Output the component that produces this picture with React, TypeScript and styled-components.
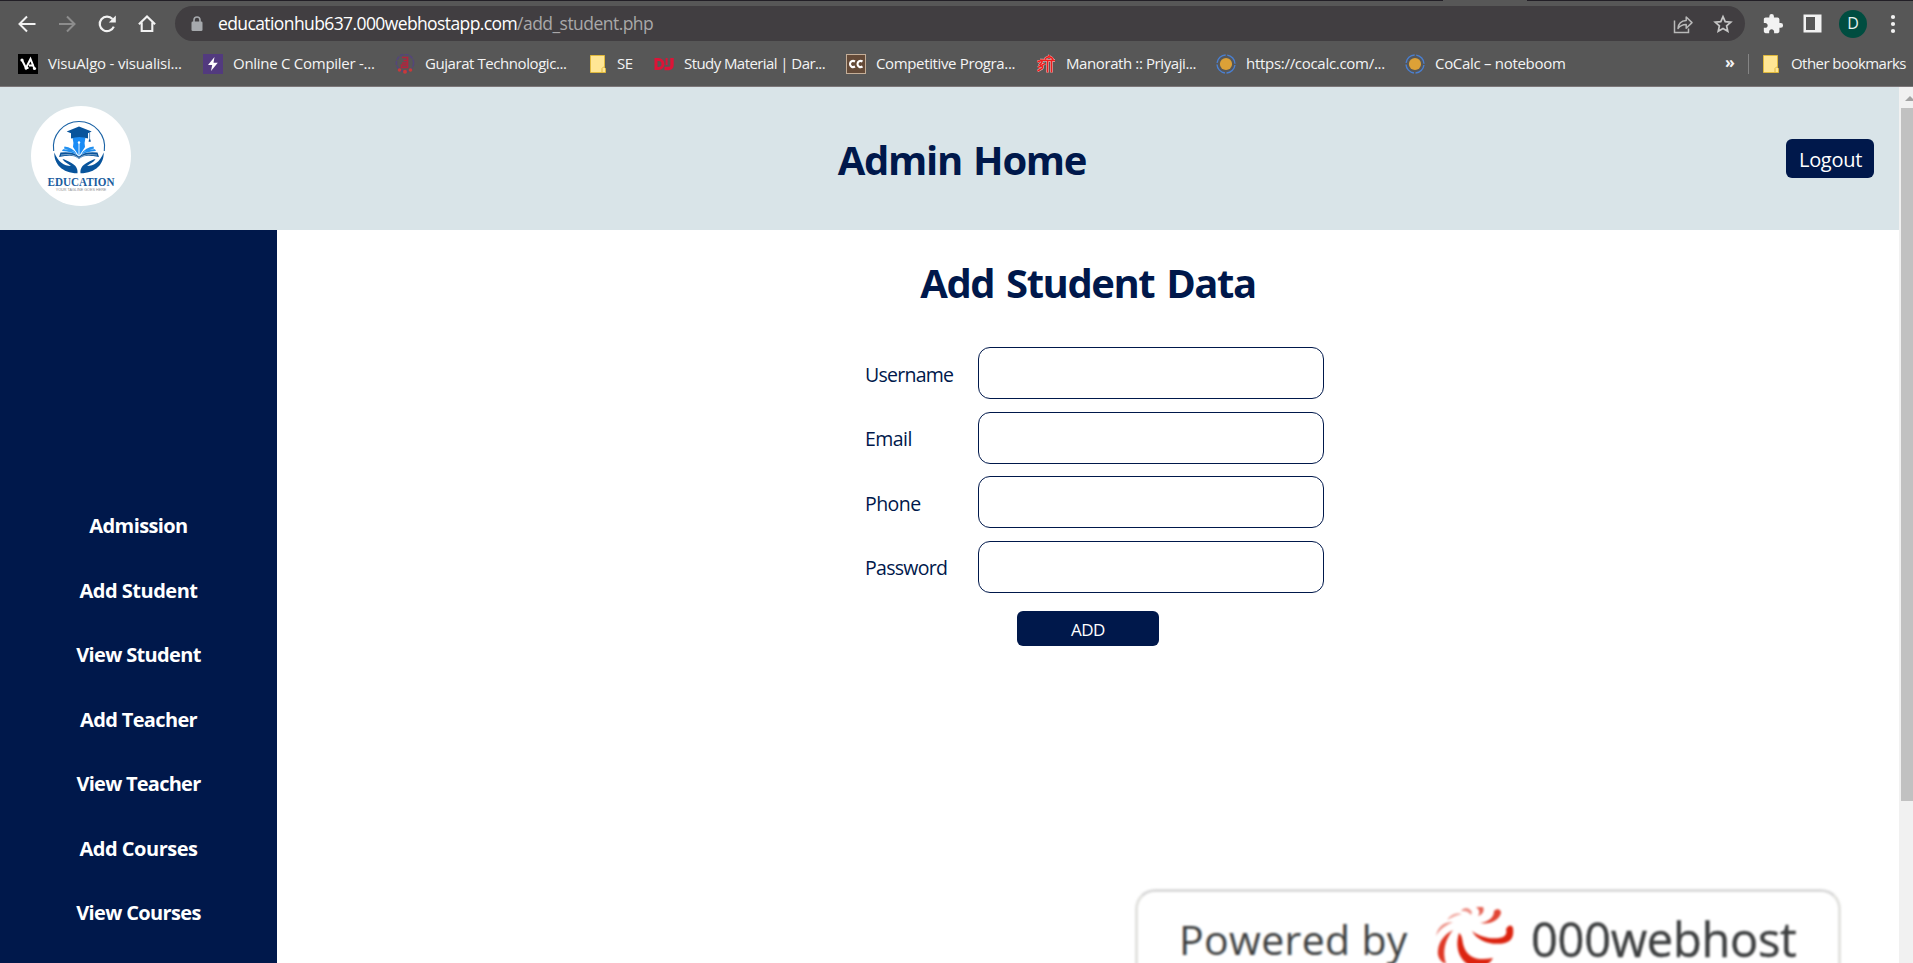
import React from 'react';
import styled, { createGlobalStyle } from 'styled-components';

const NAVY = '#00184b';

const Global = createGlobalStyle`
  *, *::before, *::after { box-sizing: border-box; }
  html, body { margin: 0; padding: 0; overflow: hidden; background: #fff; }
  body { font-family: "Open Sans", "Noto Sans", sans-serif; }
  svg { display: block; flex: none; }
`;

const Window = styled.div`
  width: 1913px;
  height: 963px;
  display: flex;
  flex-direction: column;
  overflow: hidden;
`;

/* ---------- browser chrome ---------- */

const Chrome = styled.div`
  height: 87px;
  flex: none;
  display: flex;
  flex-direction: column;
  background: #575757;
  border-bottom: 1px solid #7c7779;
  color: #f4f4f4;
`;

const TabEdge = styled.div`
  height: 1px;
  display: flex;
  justify-content: flex-end;
  padding-right: 386px;
  background: #221f26;
`;

const ActiveTab = styled.div`
  width: 84px;
  background: #575757;
`;

const Toolbar = styled.div`
  height: 45px;
  display: flex;
  align-items: center;
  padding-left: 17px;
`;

const NavButtons = styled.div`
  width: 158px;
  flex: none;
  display: flex;
  gap: 20px;
`;

const AddressBar = styled.div`
  width: 1570px;
  flex: none;
  height: 35px;
  display: flex;
  align-items: center;
  padding: 0 12px 0 16px;
  border-radius: 18px;
  background: #413e41;
`;

const Url = styled.div`
  flex: 1;
  padding: 0 0 1px 15px;
  font-size: 17.5px;
  line-height: 24px;
  letter-spacing: -0.6px;
  color: #fff;
`;

const UrlPath = styled.span`
  color: #a9a8a9;
  letter-spacing: -0.54px;
`;

const AddressActions = styled.div`
  display: flex;
  gap: 20px;
`;

const ToolbarActions = styled.div`
  display: flex;
  flex: 1;
  align-items: center;
  padding-left: 17px;
`;

const Avatar = styled.div`
  width: 28px;
  height: 28px;
  margin: 0 14px 0 17px;
  padding-bottom: 1px;
  border-radius: 50%;
  background: #004d40;
  display: grid;
  place-items: center;
  font-size: 16px;
  line-height: 20px;
  color: #e6f2ef;
`;

const Bookmarks = styled.div`
  height: 36px;
  display: flex;
  align-items: center;
  padding-left: 18px;
`;

const Bookmark = styled.div<{ $width?: number; $gap?: number; $track?: number }>`
  width: ${p => (p.$width ? `${p.$width}px` : 'auto')};
  flex: none;
  display: flex;
  align-items: center;
  gap: ${p => p.$gap ?? 10}px;
  font-size: 15px;
  line-height: 20px;
  letter-spacing: ${p => p.$track ?? -0.4}px;
  white-space: nowrap;

  span { padding-bottom: 2px; }
`;

const Overflow = styled.div`
  margin-left: auto;
  width: 23px;
  font-size: 16px;
  font-weight: 700;
  line-height: 18px;
  padding-bottom: 5px;
`;

const Divider = styled.div`
  width: 1px;
  height: 20px;
  margin-right: 14px;
  background: #858585;
`;

const OtherBookmarks = styled.div`
  width: 150px;
  display: flex;
  align-items: center;
  gap: 12px;
  font-size: 15px;
  line-height: 20px;
  letter-spacing: -0.55px;
  white-space: nowrap;

  span { padding-bottom: 2px; }
`;

/* ---------- page ---------- */

const Viewport = styled.div`
  flex: 1;
  display: flex;
  min-height: 0;
`;

const Page = styled.div`
  width: 1899px;
  display: flex;
  flex-direction: column;
  position: relative;
  overflow: hidden;
`;

const Scrollbar = styled.div`
  width: 14px;
  display: flex;
  flex-direction: column;
  background: #f1f1f1;
  padding-left: 2px;
`;

const ScrollUp = styled.div`
  height: 21px;
  padding: 9px 0 0 4px;
  overflow: hidden;
`;

const Thumb = styled.div`
  height: 693px;
  background: #c1c1c1;
`;

const Header = styled.header`
  height: 143px;
  flex: none;
  display: flex;
  justify-content: space-between;
  padding: 19px 25px 0 31px;
  background: #d9e4e8;
`;

const PageTitle = styled.h1`
  margin: 0;
  padding: 27px 0 0 7px;
  font-size: 40px;
  line-height: 54px;
  font-weight: 700;
  letter-spacing: -1.3px;
  word-spacing: 2px;
  color: ${NAVY};
`;

const Logout = styled.button`
  width: 88px;
  height: 39px;
  margin: 33px 0 0;
  border: 0;
  border-radius: 6px;
  background: ${NAVY};
  color: #fff;
  font: 400 20px/38px "Open Sans", sans-serif;
  letter-spacing: -0.3px;
  padding: 2px 0 0 1px;
`;

const Body = styled.div`
  flex: 1;
  display: flex;
  min-height: 0;
`;

const Sidebar = styled.nav`
  width: 277px;
  display: flex;
  flex-direction: column;
  align-items: center;
  padding-top: 264px;
  background: ${NAVY};
`;

const NavLink = styled.a<{ $track: number }>`
  height: 64.5px;
  flex: none;
  font-size: 20px;
  line-height: 64.5px;
  font-weight: 700;
  letter-spacing: ${p => p.$track}px;
  color: #fff;
`;

const Main = styled.main`
  flex: 1;
  display: flex;
  flex-direction: column;
  align-items: center;
  padding-top: 26px;
`;

const FormTitle = styled.h2`
  margin: 0;
  font-size: 40px;
  line-height: 54px;
  font-weight: 700;
  letter-spacing: -1.45px;
  word-spacing: 3px;
  color: ${NAVY};
`;

const Form = styled.form`
  width: 459px;
  margin: 37px 0 0 13px;
  display: flex;
  flex-direction: column;
  gap: 12.6px;
`;

const Field = styled.label<{ $track: number }>`
  display: flex;
  align-items: center;
  justify-content: space-between;
  font-size: 19.5px;
  letter-spacing: ${p => p.$track}px;
  color: ${NAVY};

  span { padding-top: 2.4px; }
`;

const Input = styled.input`
  width: 346px;
  height: 52px;
  border: 1px solid ${NAVY};
  border-radius: 12px;
  background: #fff;
  outline: none;
`;

const Submit = styled.button`
  width: 142px;
  height: 35px;
  margin: 6px 0 0 152px;
  border: 0;
  border-radius: 6px;
  background: ${NAVY};
  color: #fff;
  font: 400 17px/34px "Open Sans", sans-serif;
  letter-spacing: -0.5px;
  padding: 2px 0 0;
`;

const HostBadge = styled.div`
  position: absolute;
  left: 1135px;
  top: 802px;
  width: 706px;
  height: 120px;
  display: flex;
  align-items: flex-start;
  padding-left: 41px;
  border: 3px solid #e2e2df;
  border-top-color: #dadada;
  border-radius: 20px;
  background: #fff;
  color: #3d3f40;
  filter: blur(0.9px);
  white-space: nowrap;
`;

const PoweredBy = styled.span`
  width: 256px;
  padding-top: 19px;
  font-size: 41px;
  line-height: 56px;
  letter-spacing: 0.35px;
`;

const HostName = styled.span`
  padding: 15px 0 0 16px;
  font-size: 47px;
  line-height: 64px;
  letter-spacing: -0.3px;
  -webkit-text-stroke: 0.4px #3d3f40;
`;

/* ---------- drawings ---------- */

const BackIcon = () => (
  <svg width="20" height="20" viewBox="0 0 20 20" fill="none" stroke="#f2f2f2" strokeWidth="2">
    <path d="M18.5 10H3M10 2.5 2.5 10l7.5 7.5" />
  </svg>
);

const ForwardIcon = () => (
  <svg width="20" height="20" viewBox="0 0 20 20" fill="none" stroke="#8d8d8d" strokeWidth="2">
    <path d="M2 10h15.500M10 2.500 17.500 10 10 17.500" />
  </svg>
);

const ReloadIcon = () => (
  <svg width="20" height="20" viewBox="0 0 20 20">
    <path d="M16.800 12.600A7.300 7.300 0 1 1 15.500 5" fill="none" stroke="#f2f2f2" strokeWidth="2.200" />
    <path d="M18.800 1.500v7h-7z" fill="#f2f2f2" />
  </svg>
);

const HomeIcon = () => (
  <svg width="20" height="20" viewBox="0 0 20 20" fill="none" stroke="#f2f2f2" strokeWidth="2.100">
    <path d="M1.900 10.200 10 2.500l8.100 7.700M4.700 8.500v8.500h10.600V8.500" />
  </svg>
);

const LockIcon = () => (
  <svg width="12" height="16" viewBox="0 0 12 16">
    <rect x="0.500" y="5.500" width="11" height="9.500" rx="1.300" fill="#a6a9ad" />
    <path d="M3 6V4a3 3 0 0 1 6 0v2" fill="none" stroke="#a6a9ad" strokeWidth="1.600" />
  </svg>
);

const ShareIcon = () => (
  <svg width="20" height="20" viewBox="0 0 20 20" fill="none" stroke="#b9b9b9" strokeWidth="1.500">
    <path d="M1.500 6.500v12H15.500v-4" />
    <path d="M5 14.500c.4-5 3.200-7.600 8.200-7.900V3l5.800 5.600-5.800 5.600v-3.600C9.600 10.700 7 11.800 5 14.500z" strokeLinejoin="round" />
  </svg>
);

const StarIcon = () => (
  <svg width="20" height="20" viewBox="0 0 20 20" fill="none" stroke="#c6c6c6" strokeWidth="1.700">
    <path d="M10 2.600l2.200 5.100 5.600.5-4.200 3.700 1.200 5.400L10 14.500l-4.800 2.800 1.200-5.400L2.200 8.200l5.600-.5z" />
  </svg>
);

const ExtensionButton = styled.div`
  margin-right: 19px;
`;

const PuzzleIcon = () => (
  <svg width="22" height="22" viewBox="0 0 24 24" fill="#f2f2f2">
    <path d="M20.500 11H19V7c0-1.100-.9-2-2-2h-4V3.500a2.500 2.500 0 0 0-5 0V5H4c-1.100 0-2 .9-2 2v3.800h1.500c1.500 0 2.700 1.200 2.700 2.700S5 16.200 3.500 16.200H2V20c0 1.100.9 2 2 2h3.800v-1.500c0-1.500 1.200-2.700 2.700-2.700s2.700 1.200 2.700 2.700V22H17c1.100 0 2-.9 2-2v-4h1.500a2.500 2.500 0 0 0 0-5z" />
  </svg>
);

const SidePanelIcon = () => (
  <svg width="19" height="19" viewBox="0 0 19 19">
    <rect x="0.500" y="0.500" width="18" height="18" fill="#f2f2f2" />
    <rect x="3" y="3" width="9" height="13" fill="#575757" />
  </svg>
);

const DotsIcon = () => (
  <svg width="24" height="20" viewBox="0 0 24 20" fill="#f2f2f2">
    <circle cx="12" cy="3" r="2.100" />
    <circle cx="12" cy="10" r="2.100" />
    <circle cx="12" cy="17" r="2.100" />
  </svg>
);

const FolderIcon = () => (
  <svg width="16" height="18" viewBox="0 0 16 18">
    <path d="M.5.500h14v12l1 1v4H.500z" fill="#ffe694" stroke="#e0b93c" />
    <path d="M12 17.500v-4l1.500-1.500h1" fill="none" stroke="#e0b93c" />
  </svg>
);

const VisuAlgoIcon = () => (
  <svg width="20" height="20" viewBox="0 0 20 20">
    <rect width="20" height="20" />
    <path d="M4 6 8 14l4.500-9 4 10M8 14h2.500M11 11.500h5" fill="none" stroke="#fff" strokeWidth="2" />
    <circle cx="4" cy="6" r="1.600" fill="#fff" />
    <circle cx="8" cy="14" r="1.500" fill="#fff" />
    <circle cx="16.500" cy="14.500" r="1.600" fill="#fff" />
  </svg>
);

const BoltIcon = () => (
  <svg width="20" height="20" viewBox="0 0 20 20">
    <rect width="20" height="20" fill="#523a7e" />
    <path d="M11.500 3 5 11h4.200L8 17l6.800-8.300h-4.300z" fill="#fff" />
  </svg>
);

const GtuIcon = () => (
  <svg width="20" height="20" viewBox="0 0 20 20">
    <circle cx="10" cy="9" r="8.600" fill="none" stroke="#54467a" strokeWidth="1.600" strokeDasharray="4 1" />
    <path d="M7 3.500h5.500v10H6.500V11h6M8.500 6.500h4M7 9h5.500" fill="none" stroke="#b3243d" strokeWidth="1.700" />
    <g fill="#c73a3a">
      <circle cx="4.500" cy="16" r="1.800" />
      <circle cx="10" cy="17.800" r="2" />
      <circle cx="15.500" cy="16" r="1.800" />
    </g>
  </svg>
);

const DjIcon = () => (
  <svg width="20" height="20" viewBox="0 0 20 20" fill="none" stroke="#dc1437">
    <path d="M2 5.500h2.500a4 4 0 0 1 0 9H2z" strokeWidth="3" />
    <path d="M18 4v7.500a3 3 0 0 1-3 3h-4.500" strokeWidth="3.400" />
    <path d="M12.600 4v7" strokeWidth="2" />
  </svg>
);

const CcIcon = () => (
  <svg width="20" height="20" viewBox="0 0 20 20">
    <rect x="0.500" y="0.500" width="19" height="19" fill="#644a38" stroke="#c4ae98" />
    <path d="M9 7.500C6.500 6 4 7.500 4 10s2.500 4 5 2.500M16.500 7.500C14 6 11.500 7.500 11.500 10s2.500 4 5 2.500" fill="none" stroke="#fff" strokeWidth="2.100" />
  </svg>
);

const SHRI = 'M1.500 8c3-2 6-1 4 1s-3 1 0 3-1 3-4 5M2 13.500l7-4M4 6 19 6.500M11.500 7v11.500M15.500 7v11.500M9 5c2-3 7-3 8 1M12.500 3l1-2';

const ShriIcon = () => (
  <svg width="20" height="20" viewBox="0 0 20 20" fill="none">
    <path d={SHRI} stroke="#f3dcdc" strokeWidth="2.400" />
    <path d={SHRI} stroke="#ee1c1c" strokeWidth="1.600" />
  </svg>
);

const CoCalcIcon = () => (
  <svg width="20" height="20" viewBox="0 0 20 20">
    <circle cx="10" cy="10" r="9" fill="none" stroke="#4a7fd0" strokeWidth="1.400" strokeDasharray="12.500 1.640" strokeDashoffset="-1" />
    <circle cx="10" cy="10" r="6.100" fill="#dca137" />
  </svg>
);

const EducationLogo = () => (
  <svg width="100" height="100" viewBox="0 0 100 100">
    <circle cx="50" cy="50" r="50" fill="#fff" />
    <path d="M22.700 45A25.600 25.600 0 1 1 73.300 45" fill="none" stroke="#1a62a5" strokeWidth="1.100" />
    <path d="M41.500 31.500Q48 29.500 54.500 31.500 53 37 54 41L48 50 42 41Q43 37 41.500 31.500z" fill="#1a8cf5" />
    <path d="M48 36v14" stroke="#fff" strokeWidth="0.900" />
    <circle cx="48" cy="36.500" r="1.200" fill="#fff" />
    <path d="M35.700 25.600 48 20.500l12.700 5.100-3.700 1.600v5.300q-9-3.200-17 0v-5.300z" fill="#08549c" />
    <path d="M58.600 26.500v7.500" stroke="#08549c" strokeWidth="0.600" />
    <path d="M58 33.500h1.400l.4 2.300h-2.200z" fill="#08549c" />
    <path d="M32 43.200q9-.5 15 6.300Q41 45.500 31 45zM33.500 40.500q8 1 12 7-5-3.500-12.500-5zM64 43.200q-9-.5-15 6.300Q55 45.500 65 45zM62.500 40.500q-8 1-12 7 5-3.500 12.500-5z" fill="#2190f0" />
    <path d="M29.500 46.500Q42 45 48 50.500q6-5.500 18.500-4L68 51q-14-3-18.200.7l-1.800 1.300-1.800-1.300Q42 48 28 51z" fill="#08549c" />
    <path d="M30 49q12-1.800 18 3.300Q54 47.200 66 49" fill="none" stroke="#fff" strokeWidth="0.500" />
    <path d="M23.300 46.500C23 58 31 67 46.500 67.300c.5-5-2-8-6.500-10.500-3-1.800-6-3.300-8.500-3.800 1.500 3 4.500 3.800 8.500 7C33 60 27 56 23.300 46.500zM72.700 46.500C73 58 65 67 49.500 67.300c-.5-5 2-8 6.500-10.500 3-1.800 6-3.300 8.500-3.800-1.500 3-4.500 3.800-8.500 7 7 0 13-4 16.700-13.500z" fill="#08549c" />
    <text x="16.500" y="79.500" fontFamily="Liberation Serif, serif" fontWeight="700" fontSize="12" textLength="67" lengthAdjust="spacingAndGlyphs" fill="#1b5c9e">EDUCATION</text>
    <text x="24.700" y="84.900" fontFamily="Liberation Sans, sans-serif" fontSize="3.700" textLength="50.600" fill="#8d8d8d">YOUR TAGLINE GOES HERE</text>
  </svg>
);

const FlameIcon = () => (
  <svg width="80" height="90" viewBox="0 -14 80 90" fill="#dc2410">
    <path d="M37 25c9 7 23 9 31 6 3-2 4-4 3-8 3-5 6-4 7-1 1 8-1 13-8 15-13 3-28-2-33-12z" />
    <path d="M24 27c4 3 3 9 5 14 4 11 14 14 29 11-4 7-10 10-17 10-15-4-22-18-17-35z" />
    <path d="M18 24C10 34 7 45 11 58c-6-2-9-8-8-14 1-9 7-16 15-20z" opacity="0.900" />
    <path d="M45 17c8-1 14-5 14-12 3-3 7-2 7 2-2 7-11 12-21 10z" opacity="0.850" />
    <path d="M41 1h7c2 4-1 8-5 9 2-3 2-6-2-9z" opacity="0.700" />
    <path d="M26 5c3-4 8-4 11 1l-1 3c-3-4-6-4-10-4z" opacity="0.500" />
    <path d="M12 14c4-6 9-8 15-6-5 1-9 3-15 6z" opacity="0.400" />
    <path d="M1 30c2-10 8-14 17-14C11 19 5 23 1 30z" opacity="0.500" />
  </svg>
);

const bookmarks = [
  { icon: <VisuAlgoIcon />, label: 'VisuAlgo - visualisi...', width: 185, track: -0.2 },
  { icon: <BoltIcon />, label: 'Online C Compiler -...', width: 192, track: -0.27 },
  { icon: <GtuIcon />, label: 'Gujarat Technologic...', width: 195, track: -0.43 },
  { icon: <FolderIcon />, label: 'SE', width: 64, gap: 11, track: -0.4 },
  { icon: <DjIcon />, label: 'Study Material | Dar...', width: 192, track: -0.57 },
  { icon: <CcIcon />, label: 'Competitive Progra...', width: 190, track: -0.36 },
  { icon: <ShriIcon />, label: 'Manorath :: Priyaji...', width: 180, track: -0.4 },
  { icon: <CoCalcIcon />, label: 'https://cocalc.com/...', width: 189, track: -0.29 },
  { icon: <CoCalcIcon />, label: 'CoCalc – noteboom', width: 180, track: -0.3 },
];

const links = [
  { label: 'Admission', track: -0.6 },
  { label: 'Add Student', track: -0.5 },
  { label: 'View Student', track: -0.65 },
  { label: 'Add Teacher', track: -0.65 },
  { label: 'View Teacher', track: -0.75 },
  { label: 'Add Courses', track: -0.5 },
  { label: 'View Courses', track: -0.65 },
];

const fields = [
  { label: 'Username', type: 'text', track: -0.75 },
  { label: 'Email', type: 'email', track: -0.55 },
  { label: 'Phone', type: 'text', track: -0.55 },
  { label: 'Password', type: 'password', track: -0.7 },
];

export default function App() {
  return (
    <Window>
      <Global />
      <Chrome>
        <TabEdge><ActiveTab /></TabEdge>
        <Toolbar>
          <NavButtons>
            <BackIcon />
            <ForwardIcon />
            <ReloadIcon />
            <HomeIcon />
          </NavButtons>
          <AddressBar>
            <LockIcon />
            <Url>educationhub637.000webhostapp.com<UrlPath>/add_student.php</UrlPath></Url>
            <AddressActions>
              <ShareIcon />
              <StarIcon />
            </AddressActions>
          </AddressBar>
          <ToolbarActions>
            <ExtensionButton><PuzzleIcon /></ExtensionButton>
            <SidePanelIcon />
            <Avatar>D</Avatar>
            <DotsIcon />
          </ToolbarActions>
        </Toolbar>
        <Bookmarks>
          {bookmarks.map(b => (
            <Bookmark key={b.label} $width={b.width} $gap={b.gap} $track={b.track}>
              {b.icon}
              <span>{b.label}</span>
            </Bookmark>
          ))}
          <Overflow>»</Overflow>
          <Divider />
          <OtherBookmarks>
            <FolderIcon />
            <span>Other bookmarks</span>
          </OtherBookmarks>
        </Bookmarks>
      </Chrome>
      <Viewport>
        <Page>
          <Header>
            <EducationLogo />
            <PageTitle>Admin Home</PageTitle>
            <Logout>Logout</Logout>
          </Header>
          <Body>
            <Sidebar>
              {links.map(l => <NavLink key={l.label} $track={l.track}>{l.label}</NavLink>)}
            </Sidebar>
            <Main>
              <FormTitle>Add Student Data</FormTitle>
              <Form>
                {fields.map(f => (
                  <Field key={f.label} $track={f.track}>
                    <span>{f.label}</span>
                    <Input type={f.type} />
                  </Field>
                ))}
                <Submit type="button">ADD</Submit>
              </Form>
            </Main>
          </Body>
          <HostBadge>
            <PoweredBy>Powered by</PoweredBy>
            <FlameIcon />
            <HostName>000webhost</HostName>
          </HostBadge>
        </Page>
        <Scrollbar>
          <ScrollUp>
            <svg width="10" height="5" viewBox="0 0 10 5"><path d="M5 0l5 5H0z" fill="#a3a3a3" /></svg>
          </ScrollUp>
          <Thumb />
        </Scrollbar>
      </Viewport>
    </Window>
  );
}
